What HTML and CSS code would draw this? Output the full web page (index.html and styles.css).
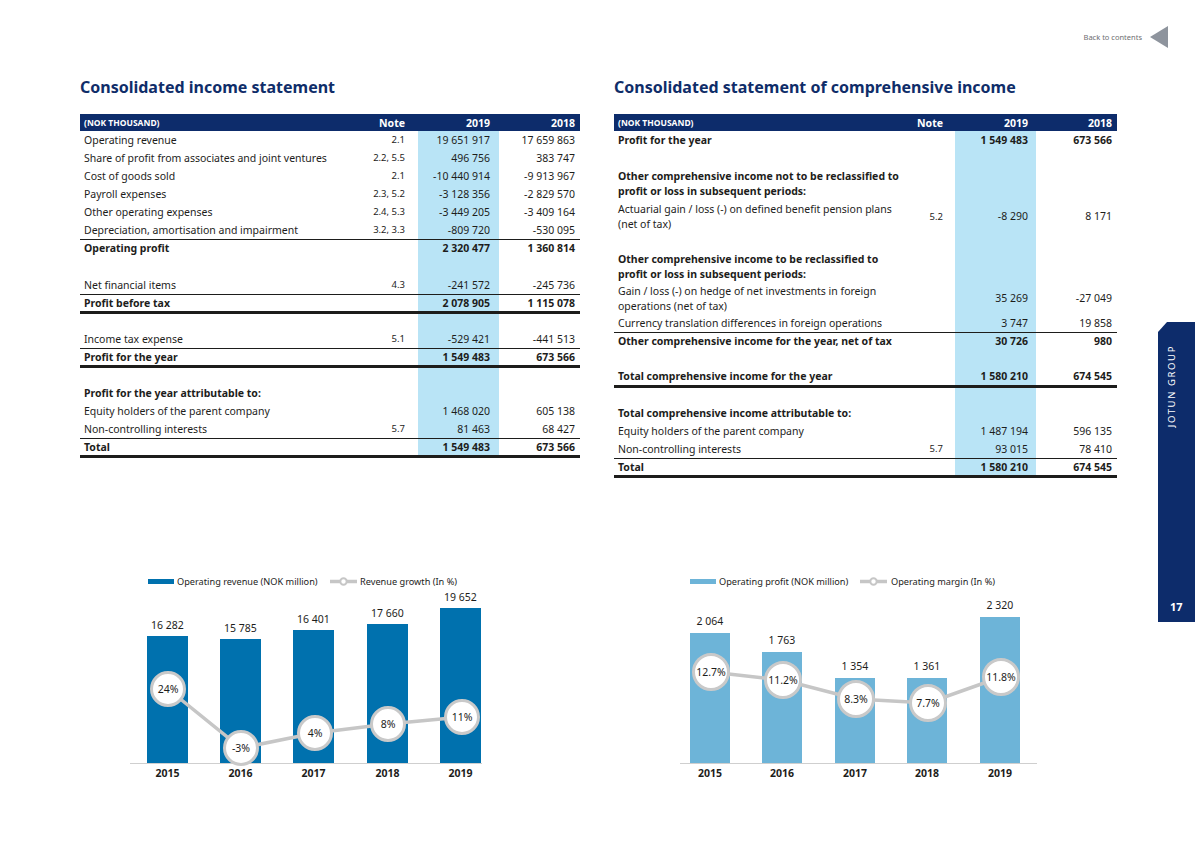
FILE: index.html
```html
<!DOCTYPE html>
<html lang="en">
<head>
<meta charset="utf-8">
<title>Consolidated income statement – Jotun Group</title>
<link rel="stylesheet" href="styles.css">
</head>
<body>
<div class="page">
  <header class="topbar">
    <a class="back" href="#contents">Back to contents</a>
    <svg class="back-arrow" width="18" height="22" viewBox="0 0 18 22" aria-hidden="true"><polygon points="0,11 18,0 18,22"/></svg>
  </header>

  <main class="main">
    <h1 class="title">Consolidated income statement</h1>
    <h1 class="title">Consolidated statement of comprehensive income</h1>

    <table class="fin fin-left">
      <colgroup><col class="w-lbl"><col class="w-note"><col class="w-y"><col class="w-y"></colgroup>
      <thead>
        <tr><th class="lbl unit">(NOK THOUSAND)</th><th class="note">Note</th><th class="y1">2019</th><th class="y0">2018</th></tr>
      </thead>
      <tbody>
        <tr><td class="lbl">Operating revenue</td><td class="note">2.1</td><td class="y1">19 651 917</td><td class="y0">17 659 863</td></tr>
        <tr><td class="lbl">Share of profit from associates and joint ventures</td><td class="note">2.2, 5.5</td><td class="y1">496 756</td><td class="y0">383 747</td></tr>
        <tr><td class="lbl">Cost of goods sold</td><td class="note">2.1</td><td class="y1">-10 440 914</td><td class="y0">-9 913 967</td></tr>
        <tr><td class="lbl">Payroll expenses</td><td class="note">2.3, 5.2</td><td class="y1">-3 128 356</td><td class="y0">-2 829 570</td></tr>
        <tr><td class="lbl">Other operating expenses</td><td class="note">2.4, 5.3</td><td class="y1">-3 449 205</td><td class="y0">-3 409 164</td></tr>
        <tr class="rule"><td class="lbl">Depreciation, amortisation and impairment</td><td class="note">3.2, 3.3</td><td class="y1">-809 720</td><td class="y0">-530 095</td></tr>
        <tr class="bold"><td class="lbl">Operating profit</td><td class="note"></td><td class="y1">2 320 477</td><td class="y0">1 360 814</td></tr>
        <tr class="blank wide"><td class="lbl"></td><td class="note"></td><td class="y1"></td><td class="y0"></td></tr>
        <tr class="rule"><td class="lbl">Net financial items</td><td class="note">4.3</td><td class="y1">-241 572</td><td class="y0">-245 736</td></tr>
        <tr class="bold thick"><td class="lbl">Profit before tax</td><td class="note"></td><td class="y1">2 078 905</td><td class="y0">1 115 078</td></tr>
        <tr class="blank"><td class="lbl"></td><td class="note"></td><td class="y1"></td><td class="y0"></td></tr>
        <tr class="rule"><td class="lbl">Income tax expense</td><td class="note">5.1</td><td class="y1">-529 421</td><td class="y0">-441 513</td></tr>
        <tr class="bold thick"><td class="lbl">Profit for the year</td><td class="note"></td><td class="y1">1 549 483</td><td class="y0">673 566</td></tr>
        <tr class="blank"><td class="lbl"></td><td class="note"></td><td class="y1"></td><td class="y0"></td></tr>
        <tr class="bold"><td class="lbl">Profit for the year attributable to:</td><td class="note"></td><td class="y1"></td><td class="y0"></td></tr>
        <tr><td class="lbl">Equity holders of the parent company</td><td class="note"></td><td class="y1">1 468 020</td><td class="y0">605 138</td></tr>
        <tr class="rule"><td class="lbl">Non-controlling interests</td><td class="note">5.7</td><td class="y1">81 463</td><td class="y0">68 427</td></tr>
        <tr class="bold thick"><td class="lbl">Total</td><td class="note"></td><td class="y1">1 549 483</td><td class="y0">673 566</td></tr>
      </tbody>
    </table>

    <table class="fin fin-right">
      <colgroup><col class="w-lbl"><col class="w-note"><col class="w-y"><col class="w-y"></colgroup>
      <thead>
        <tr><th class="lbl unit">(NOK THOUSAND)</th><th class="note">Note</th><th class="y1">2019</th><th class="y0">2018</th></tr>
      </thead>
      <tbody>
        <tr class="bold"><td class="lbl">Profit for the year</td><td class="note"></td><td class="y1">1 549 483</td><td class="y0">673 566</td></tr>
        <tr class="blank"><td class="lbl"></td><td class="note"></td><td class="y1"></td><td class="y0"></td></tr>
        <tr class="bold two first"><td class="lbl">Other comprehensive income not to be reclassified to<br>profit or loss in subsequent periods:</td><td class="note"></td><td class="y1"></td><td class="y0"></td></tr>
        <tr class="two"><td class="lbl">Actuarial gain / loss (-) on defined benefit pension plans<br>(net of tax)</td><td class="note">5.2</td><td class="y1">-8 290</td><td class="y0">8 171</td></tr>
        <tr class="blank"><td class="lbl"></td><td class="note"></td><td class="y1"></td><td class="y0"></td></tr>
        <tr class="bold two"><td class="lbl">Other comprehensive income to be reclassified to<br>profit or loss in subsequent periods:</td><td class="note"></td><td class="y1"></td><td class="y0"></td></tr>
        <tr class="two"><td class="lbl">Gain / loss (-) on hedge of net investments in foreign<br>operations (net of tax)</td><td class="note"></td><td class="y1">35 269</td><td class="y0">-27 049</td></tr>
        <tr class="rule"><td class="lbl">Currency translation differences in foreign operations</td><td class="note"></td><td class="y1">3 747</td><td class="y0">19 858</td></tr>
        <tr class="bold"><td class="lbl">Other comprehensive income for the year, net of tax</td><td class="note"></td><td class="y1">30 726</td><td class="y0">980</td></tr>
        <tr class="blank"><td class="lbl"></td><td class="note"></td><td class="y1"></td><td class="y0"></td></tr>
        <tr class="bold thick"><td class="lbl">Total comprehensive income for the year</td><td class="note"></td><td class="y1">1 580 210</td><td class="y0">674 545</td></tr>
        <tr class="blank"><td class="lbl"></td><td class="note"></td><td class="y1"></td><td class="y0"></td></tr>
        <tr class="bold"><td class="lbl">Total comprehensive income attributable to:</td><td class="note"></td><td class="y1"></td><td class="y0"></td></tr>
        <tr><td class="lbl">Equity holders of the parent company</td><td class="note"></td><td class="y1">1 487 194</td><td class="y0">596 135</td></tr>
        <tr class="rule"><td class="lbl">Non-controlling interests</td><td class="note">5.7</td><td class="y1">93 015</td><td class="y0">78 410</td></tr>
        <tr class="bold thick"><td class="lbl">Total</td><td class="note"></td><td class="y1">1 580 210</td><td class="y0">674 545</td></tr>
      </tbody>
    </table>

    <figure class="chart chart-left">
      <svg width="360" height="212" viewBox="0 0 360 212" role="img" aria-label="Operating revenue and revenue growth 2015-2019">
        <rect x="18" y="7" width="26" height="5" class="bar-dark"/>
        <text x="47" y="13" class="legend">Operating revenue (NOK million)</text>
        <line x1="200" y1="9.5" x2="227" y2="9.5" class="trend"/>
        <circle cx="213.5" cy="9.5" r="3.2" class="dot-s"/>
        <text x="230" y="13" class="legend">Revenue growth (In %)</text>

        <line x1="0" y1="191.5" x2="352" y2="191.5" class="axis"/>
        <rect x="17" y="64" width="41" height="127" class="bar-dark"/>
        <rect x="90" y="67" width="41" height="124" class="bar-dark"/>
        <rect x="163" y="58" width="41" height="133" class="bar-dark"/>
        <rect x="237" y="52" width="41" height="139" class="bar-dark"/>
        <rect x="310" y="36" width="41" height="155" class="bar-dark"/>

        <text x="37.5" y="57" class="val">16 282</text>
        <text x="110.5" y="60" class="val">15 785</text>
        <text x="183.5" y="51" class="val">16 401</text>
        <text x="257.5" y="45" class="val">17 660</text>
        <text x="330.5" y="29" class="val">19 652</text>

        <polyline points="38,117 111,176 185,161 258,152 332,145" class="trend"/>
        <circle cx="38" cy="117" r="16.5" class="dot"/>
        <circle cx="111" cy="176" r="16.5" class="dot"/>
        <circle cx="185" cy="161" r="16.5" class="dot"/>
        <circle cx="258" cy="152" r="16.5" class="dot"/>
        <circle cx="332" cy="145" r="16.5" class="dot"/>
        <text x="38" y="121" class="pct">24%</text>
        <text x="111" y="180" class="pct">-3%</text>
        <text x="185" y="165" class="pct">4%</text>
        <text x="258" y="156" class="pct">8%</text>
        <text x="332" y="149" class="pct">11%</text>

        <text x="37.5" y="205" class="year">2015</text>
        <text x="110.5" y="205" class="year">2016</text>
        <text x="183.5" y="205" class="year">2017</text>
        <text x="257.5" y="205" class="year">2018</text>
        <text x="330.5" y="205" class="year">2019</text>
      </svg>
    </figure>

    <figure class="chart chart-right">
      <svg width="360" height="212" viewBox="0 0 360 212" role="img" aria-label="Operating profit and operating margin 2015-2019">
        <rect x="10" y="7" width="26" height="5" class="bar-light"/>
        <text x="39" y="13" class="legend">Operating profit (NOK million)</text>
        <line x1="180" y1="9.5" x2="207" y2="9.5" class="trend"/>
        <circle cx="193.5" cy="9.5" r="3.2" class="dot-s"/>
        <text x="211" y="13" class="legend">Operating margin (In %)</text>

        <line x1="0" y1="191.5" x2="357" y2="191.5" class="axis"/>
        <rect x="10" y="61" width="40" height="130" class="bar-light"/>
        <rect x="82" y="80" width="40" height="111" class="bar-light"/>
        <rect x="155" y="106" width="40" height="85" class="bar-light"/>
        <rect x="227" y="106" width="40" height="85" class="bar-light"/>
        <rect x="300" y="45" width="40" height="146" class="bar-light"/>

        <text x="30" y="53" class="val">2 064</text>
        <text x="102" y="72" class="val">1 763</text>
        <text x="175" y="98" class="val">1 354</text>
        <text x="247" y="98" class="val">1 361</text>
        <text x="320" y="37" class="val">2 320</text>

        <polyline points="31,100 103,108 176,127 248,131 321,105" class="trend"/>
        <circle cx="31" cy="100" r="17.5" class="dot"/>
        <circle cx="103" cy="108" r="17.5" class="dot"/>
        <circle cx="176" cy="127" r="17.5" class="dot"/>
        <circle cx="248" cy="131" r="17.5" class="dot"/>
        <circle cx="321" cy="105" r="17.5" class="dot"/>
        <text x="31" y="104" class="pct">12.7%</text>
        <text x="103" y="112" class="pct">11.2%</text>
        <text x="176" y="131" class="pct">8.3%</text>
        <text x="248" y="135" class="pct">7.7%</text>
        <text x="321" y="109" class="pct">11.8%</text>

        <text x="30" y="205" class="year">2015</text>
        <text x="102" y="205" class="year">2016</text>
        <text x="175" y="205" class="year">2017</text>
        <text x="247" y="205" class="year">2018</text>
        <text x="320" y="205" class="year">2019</text>
      </svg>
    </figure>
  </main>

  <aside class="rail">
    <div class="tab">
      <span class="tab-name">JOTUN GROUP</span>
      <span class="tab-page">17</span>
    </div>
  </aside>
</div>
</body>
</html>
```

FILE: styles.css
```css
* { box-sizing: border-box; margin: 0; padding: 0; }

html, body {
  width: 1195px;
  height: 845px;
  background: #ffffff;
}

body {
  font-family: "Noto Sans", "Open Sans", sans-serif;
  color: #1d1d1b;
  overflow: hidden;
}

.page {
  display: grid;
  grid-template-columns: 1fr 37px;
  grid-template-rows: 48px 1fr;
  height: 845px;
}

/* top navigation */
.topbar {
  grid-column: 1 / -1;
  display: flex;
  justify-content: flex-end;
  align-items: center;
  gap: 8px;
  padding: 26px 27px 0 0;
}

.back {
  font-size: 7.5px;
  color: #6d6e71;
  text-decoration: none;
}

.back-arrow polygon { fill: #8e949d; }

/* main content grid */
.main {
  grid-column: 1;
  grid-row: 2;
  display: grid;
  grid-template-columns: 500px 503px;
  column-gap: 34px;
  align-items: start;
  align-content: start;
  padding-left: 80px;
}

.title {
  font-size: 16px;
  line-height: 20px;
  font-weight: 700;
  color: #0f2d69;
  white-space: nowrap;
  margin-top: 29px;
  margin-bottom: 17px;
}

/* financial tables */
.fin {
  border-collapse: collapse;
  table-layout: fixed;
  font-size: 10.5px;
}

.fin-left { width: 500px; }
.fin-right { width: 503px; }

.fin-left .w-lbl { width: 260px; }
.fin-left .w-note { width: 78px; }
.fin-right .w-lbl { width: 301px; }
.fin-right .w-note { width: 40px; }
.fin .w-y { width: 81px; }

.fin th {
  background: #0d2c6b;
  color: #ffffff;
  font-weight: 700;
  font-size: 10.5px;
  height: 17px;
  line-height: 16px;
  text-align: right;
  padding: 0;
  white-space: nowrap;
}

.fin th.unit {
  font-size: 8.5px;
  text-align: left;
}

.fin td {
  height: 18px;
  padding: 0;
  line-height: 16px;
  vertical-align: middle;
  white-space: nowrap;
}

.fin .lbl { padding-left: 4px; text-align: left; }
.fin .note { text-align: right; padding-right: 13px; font-size: 9.5px; }
.fin th.note { font-size: 10.5px; }
.fin-right .note { padding-right: 12px; }
.fin .y1 { text-align: right; padding-right: 9px; }
.fin td.y1 { background: #b9e4f6; }
.fin-right .y1 { padding-right: 8px; }
.fin .y0 { text-align: right; padding-right: 5px; }

.fin tr.bold td { font-weight: 700; }
.fin tr.rule td { border-bottom: 1px solid #1d1d1b; }
.fin tr.thick td { border-bottom: 3px solid #1d1d1b; }
.fin tr.wide td { height: 19px; }
.fin tr.two td { height: 32px; line-height: 15px; padding-top: 1px; }
.fin tr.two.first td { height: 33px; }

/* charts */
.chart {
  margin-top: 94px;
}

.chart-left { margin-left: 50px; }
.chart-right { margin-left: 66px; }

.chart svg { display: block; overflow: visible; }

.chart text {
  font-family: "Noto Sans", "Open Sans", sans-serif;
  fill: #1d1d1b;
}

.chart .legend { font-size: 9.2px; }
.chart .val { font-size: 10.5px; text-anchor: middle; }
.chart .pct { font-size: 10.5px; text-anchor: middle; }
.chart .year { font-size: 10.5px; font-weight: 700; text-anchor: middle; }

.bar-dark { fill: #0071ae; }
.bar-light { fill: #6db4d8; }
.axis { stroke: #cfcfcf; stroke-width: 1; }
.trend { fill: none; stroke: #c6c6c6; stroke-width: 3.5; }
.dot { fill: #ffffff; stroke: #c9c9c9; stroke-width: 3; }
.dot-s { fill: #ffffff; stroke: #c6c6c6; stroke-width: 2; }

/* side tab */
.rail {
  grid-column: 2;
  grid-row: 2;
}

.tab {
  margin-top: 274px;
  height: 300px;
  background: #0d2c6b;
  color: #ffffff;
  display: flex;
  flex-direction: column;
  justify-content: space-between;
  align-items: flex-start;
  padding: 23px 0 9px;
  clip-path: polygon(9px 0, 100% 0, 100% 100%, 0 100%, 0 10px);
}

.tab-name {
  writing-mode: vertical-rl;
  transform: rotate(180deg);
  font-size: 9.5px;
  letter-spacing: 1.6px;
  margin-left: 9px;
  line-height: 10px;
}

.tab-page {
  font-size: 11px;
  font-weight: 700;
  margin-left: 12px;
  line-height: 12px;
}
```
